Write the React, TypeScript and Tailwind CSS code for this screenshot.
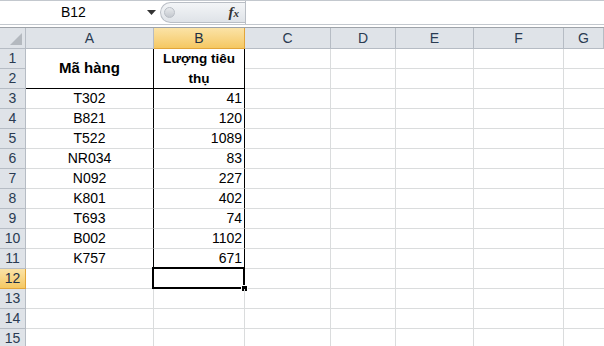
import React from "react";

const cols = [
  { key: "A", w: "w-[128px]" },
  { key: "B", w: "w-[91px]" },
  { key: "C", w: "w-[86px]" },
  { key: "D", w: "w-[65px]" },
  { key: "E", w: "w-[78px]" },
  { key: "F", w: "w-[90px]" },
  { key: "G", w: "flex-1" },
];

const data: [string, string][] = [
  ["T302", "41"],
  ["B821", "120"],
  ["T522", "1089"],
  ["NR034", "83"],
  ["N092", "227"],
  ["K801", "402"],
  ["T693", "74"],
  ["B002", "1102"],
  ["K757", "671"],
];

function RowHead({ n, active }: { n: number; active?: boolean }) {
  return (
    <div
      className={
        "w-[26px] h-[20px] shrink-0 flex items-center justify-center text-[14px] border-r border-b " +
        (active
          ? "bg-gradient-to-b from-[#fbe3a6] to-[#f5c862] border-[#e2a53a] text-[#1e2f44]"
          : "bg-[#dfe3e8] border-[#b6bcc4] text-[#2a3b52]")
      }
    >
      {n}
    </div>
  );
}

function EmptyCells() {
  return (
    <>
      <div className="w-[86px] h-full shrink-0 border-r border-b border-[#dadcdd]" />
      <div className="w-[65px] h-full shrink-0 border-r border-b border-[#dadcdd]" />
      <div className="w-[78px] h-full shrink-0 border-r border-b border-[#dadcdd]" />
      <div className="w-[90px] h-full shrink-0 border-r border-b border-[#dadcdd]" />
      <div className="flex-1 h-full border-b border-[#dadcdd]" />
    </>
  );
}

export default function App() {
  return (
    <div
      className="w-[604px] h-[346px] overflow-hidden bg-white text-black"
      style={{ fontFamily: '"Liberation Sans", Arial, sans-serif' }}
    >
      {/* formula bar */}
      <div className="h-[25px] flex border-t border-b border-[#c3c8ce]">
        <div className="w-[160px] shrink-0 flex items-center relative">
          <span className="absolute left-[61px] text-[14px]">B12</span>
          <svg className="absolute left-[147px] top-[9px]" width="9" height="5" viewBox="0 0 9 5">
            <path d="M0 0h9L4.5 5z" fill="#333" />
          </svg>
        </div>
        <div className="w-[85px] shrink-0 flex items-center justify-between rounded-l-full border border-r-0 border-[#b9bec5] bg-gradient-to-b from-[#f3f5f7] to-[#dfe3e8] my-[1px]">
          <div className="ml-[3px] w-[11px] h-[11px] rounded-full bg-gradient-to-b from-[#e7e9ec] to-[#c4c9cf] border border-[#b9bec5]" />
          <span className="mr-[6px] text-[15px] italic font-bold text-[#333]" style={{ fontFamily: '"Liberation Serif", serif' }}>
            f<span className="text-[11px]">x</span>
          </span>
        </div>
        <div className="flex-1 border-l border-[#b9bec5]" />
      </div>
      <div className="h-[2px]" />
      <div className="h-px bg-[#9ea3a9]" />

      {/* column headers */}
      <div className="flex h-[21px]">
        <div className="w-[26px] shrink-0 bg-[#dfe3e8] border-r border-b border-[#b6bcc4] relative">
          <svg className="absolute right-[3px] bottom-[3px]" width="12" height="12" viewBox="0 0 12 12">
            <path d="M12 0V12H0z" fill="#b4b9bf" />
          </svg>
        </div>
        {cols.map((c) => (
          <div
            key={c.key}
            className={
              c.w +
              " shrink-0 flex items-center justify-center text-[14px] border-r border-b " +
              (c.key === "B"
                ? "bg-gradient-to-b from-[#fbe3a6] to-[#f5c862] border-[#e2a53a] text-[#1e2f44]"
                : "bg-[#dfe3e8] border-[#b6bcc4] text-[#2a3b52]")
            }
          >
            {c.key}
          </div>
        ))}
      </div>

      {/* rows 1-2 (merged A1:A2 and B1:B2) */}
      <div className="flex h-[40px]">
        <div className="flex flex-col shrink-0">
          <RowHead n={1} />
          <RowHead n={2} />
        </div>
        <div className="w-[128px] shrink-0 flex items-center justify-center font-bold text-[15px] border-r border-b border-r-black border-b-black">
          Mã hàng
        </div>
        <div className="w-[91px] shrink-0 flex items-center justify-center text-center font-bold text-[13.5px] leading-[20px] border-r border-b border-black">
          Lượng tiêu
          <br />
          thụ
        </div>
        <div className="flex flex-col flex-1">
          <div className="h-[20px] flex">
            <EmptyCells />
          </div>
          <div className="h-[20px] flex">
            <EmptyCells />
          </div>
        </div>
      </div>

      {/* data rows */}
      {data.map(([code, qty], i) => (
        <div key={code} className="flex h-[20px]">
          <RowHead n={i + 3} />
          <div className="w-[128px] shrink-0 flex items-center justify-center text-[14px] border-r border-b border-r-black border-b-[#dadcdd]">
            {code}
          </div>
          <div className="w-[91px] shrink-0 flex items-center justify-end pr-[2px] text-[14px] border-r border-b border-r-black border-b-[#dadcdd]">
            {qty}
          </div>
          <EmptyCells />
        </div>
      ))}

      {/* empty rows 12-15 */}
      {[12, 13, 14, 15].map((n) => (
        <div key={n} className="flex h-[20px]">
          <RowHead n={n} active={n === 12} />
          <div className="w-[128px] shrink-0 border-r border-b border-[#dadcdd]" />
          <div className="w-[91px] shrink-0 border-r border-b border-[#dadcdd] relative">
            {n === 12 && (
              <>
                <div className="absolute -left-[2px] -top-[2px] -right-px -bottom-px border-2 border-black" />
                <div className="absolute -right-[4px] -bottom-[4px] w-[7px] h-[7px] bg-black border border-white" />
              </>
            )}
          </div>
          <EmptyCells />
        </div>
      ))}
    </div>
  );
}
